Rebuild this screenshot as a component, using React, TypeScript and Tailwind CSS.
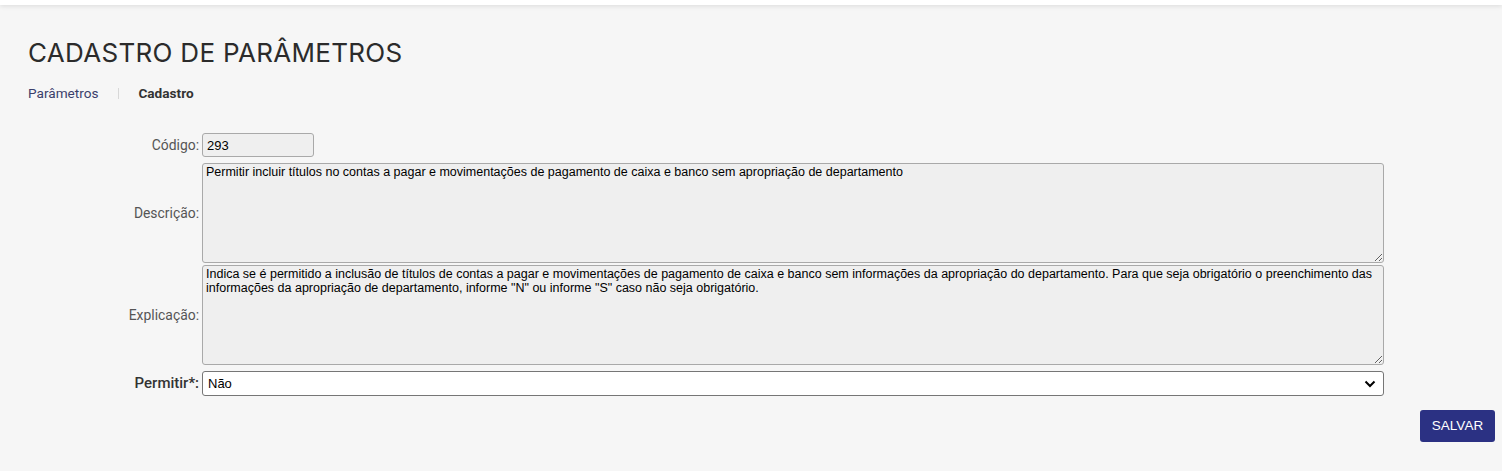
import React from "react";

const descricao =
  "Permitir incluir títulos no contas a pagar e movimentações de pagamento de caixa e banco sem apropriação de departamento";
const explicacao =
  'Indica se é permitido a inclusão de títulos de contas a pagar e movimentações de pagamento de caixa e banco sem informações da apropriação do departamento. Para que seja obrigatório o preenchimento das informações da apropriação de departamento, informe "N" ou informe "S" caso não seja obrigatório.';

export default function App() {
  return (
    <div className="w-[1502px] h-[471px] overflow-hidden bg-[#f6f6f6] font-['Roboto',sans-serif]">
      <div className="h-[5px] bg-white shadow-[0_1px_5px_rgba(0,0,0,0.12)] relative z-10" />
      <div className="px-[28px] pt-[32px]">
        <h1 className="font-['Inter',sans-serif] text-[26px] leading-[32px] text-[#2b2b2b] font-normal tracking-[0.3px]">
          CADASTRO DE PARÂMETROS
        </h1>
        <div className="flex items-center mt-[16px] text-[13.6px] leading-[16px]">
          <span className="text-[#3b3f6b]">Parâmetros</span>
          <span className="ml-[20px] mr-[19px] h-[11px] w-px bg-[#d8d8d8]" />
          <span className="font-bold text-[#333]">Cadastro</span>
        </div>
      </div>

      <div className="mt-[32px] grid grid-cols-[199px_1182px] gap-x-[3px] items-center font-['Liberation_Sans',Arial,sans-serif]">
        <label className="text-right font-['Roboto',sans-serif] text-[13.9px] text-[#555]">Código:</label>
        <input
          readOnly
          value="293"
          className="w-[112px] h-[24px] border border-[#a9a9a9] rounded-[3px] bg-[#efefef] px-[4px] text-[13px] text-black outline-none"
        />

        <label className="text-right font-['Roboto',sans-serif] text-[13.9px] text-[#555] mt-[6px]">Descrição:</label>
        <textarea
          readOnly
          value={descricao}
          className="mt-[6px] block h-[100px] w-[1182px] border border-[#a9a9a9] rounded-[3px] bg-[#efefef] px-[3px] py-[1px] text-[12.5px] leading-[14px] text-black outline-none resize-y"
        />

        <label className="text-right font-['Roboto',sans-serif] text-[13.9px] text-[#555] mt-[2px]">Explicação:</label>
        <textarea
          readOnly
          value={explicacao}
          className="mt-[2px] block h-[100px] w-[1182px] border border-[#a9a9a9] rounded-[3px] bg-[#efefef] px-[3px] py-[1px] text-[12.5px] leading-[14px] text-black outline-none resize-y"
        />

        <label className="text-right font-['Roboto',sans-serif] text-[15px] font-medium text-[#333] mt-[6px]">Permitir*:</label>
        <div className="relative mt-[6px] h-[25px] w-[1182px]">
          <select
            defaultValue="N"
            className="appearance-none w-full h-full border border-[#767676] rounded-[3px] bg-white pl-[5px] text-[13px] text-black outline-none"
          >
            <option value="N">Não</option>
            <option value="S">Sim</option>
          </select>
          <svg
            className="absolute right-[8px] top-[9px] pointer-events-none"
            width="12"
            height="8"
            viewBox="0 0 12 8"
          >
            <path d="M1.5 1.5 L6 6 L10.5 1.5" fill="none" stroke="#000" strokeWidth="2" />
          </svg>
        </div>
      </div>

      <div className="flex justify-end pr-[7px] mt-[14px]">
        <button className="h-[32px] w-[75px] rounded-[3px] bg-[#2b3183] text-white text-[13.5px] font-['Liberation_Sans',Arial,sans-serif]">
          SALVAR
        </button>
      </div>
    </div>
  );
}
